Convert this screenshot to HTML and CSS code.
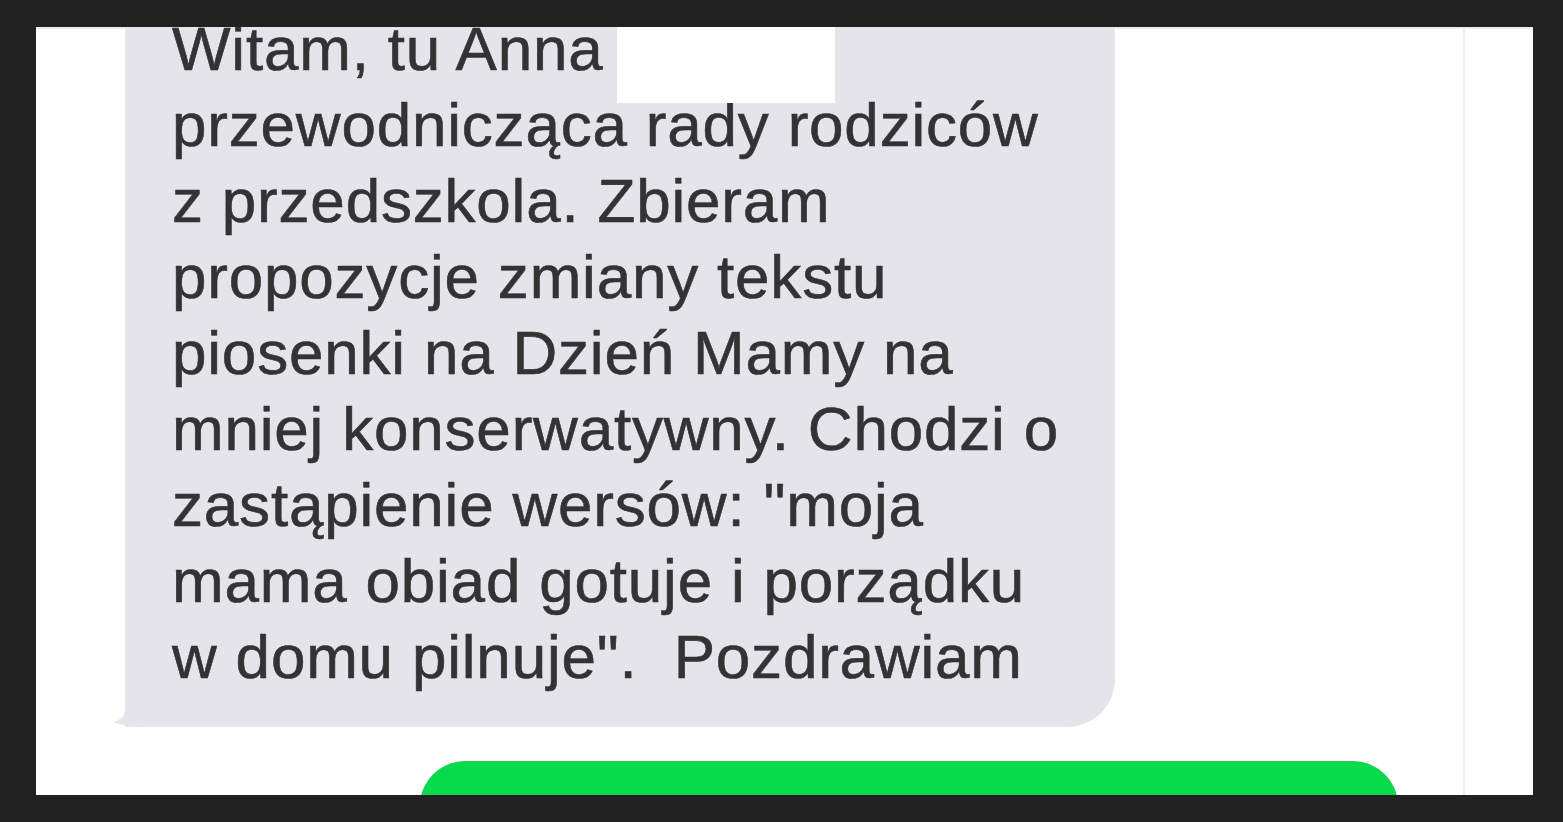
FILE: index.html
```html
<!DOCTYPE html>
<html lang="pl">
<head>
<meta charset="utf-8">
<title>Wiadomość</title>
<link rel="stylesheet" href="styles.css">
</head>
<body>
<div class="screen">
  <div class="chat">
    <div class="bubble bubble-in">
      <p class="msg">Witam, tu Anna<br>przewodnicząca rady rodziców<br>z przedszkola. Zbieram<br>propozycje zmiany tekstu<br>piosenki na Dzień Mamy na<br>mniej konserwatywny. Chodzi o<br>zastąpienie wersów: "moja<br>mama obiad gotuje i porządku<br>w domu pilnuje".&nbsp; Pozdrawiam</p>
      <span class="redact"></span>
      <svg class="tail" width="40" height="40" viewBox="0 0 40 40"><path d="M12 0 V22 C12 29 8 33 0 35 C8 38 17 39.5 26 40 H40 V0 Z" fill="#e4e4ea"/></svg>
    </div>
    <div class="bubble bubble-out"></div>
  </div>
  <div class="side"></div>
</div>
</body>
</html>
```

FILE: styles.css
```css
html, body {
  margin: 0;
  padding: 0;
  background: #212121;
}
.screen {
  margin: 27px 30px 27px 36px;
  height: 768px;
  background: #ffffff;
  overflow: hidden;
  display: flex;
  box-shadow: inset 0 2px 0 #ececec;
}
.chat {
  width: 1427px;
  flex: none;
  display: flex;
  flex-direction: column;
  border-right: 2px solid #f0f0f0;
}
.side {
  flex: 1;
}
.bubble {
  position: relative;
  flex: none;
}
.bubble-in {
  margin-top: -40px;
  margin-left: 89px;
  width: 990px;
  box-sizing: border-box;
  padding: 23.5px 0 32.5px 47px;
  background: #e4e4ea;
  border-radius: 48px 48px 48px 0;
}
.msg {
  margin: 0;
  font-family: "Liberation Sans", Arial, sans-serif;
  font-size: 62px;
  line-height: 76px;
  letter-spacing: 0.8px;
  color: #333336;
  -webkit-text-stroke: 0.6px #333336;
  white-space: nowrap;
}
.redact {
  position: absolute;
  left: 492px;
  top: 0;
  width: 218px;
  height: 116px;
  background: #ffffff;
}
.tail {
  position: absolute;
  left: -12px;
  bottom: 0;
  display: block;
}
.bubble-out {
  margin-top: 35px;
  margin-left: 384px;
  width: 978px;
  height: 90px;
  background: #07da4b;
  border-radius: 50px;
  box-shadow: 0 -1px 0 #33c45e;
}
```
